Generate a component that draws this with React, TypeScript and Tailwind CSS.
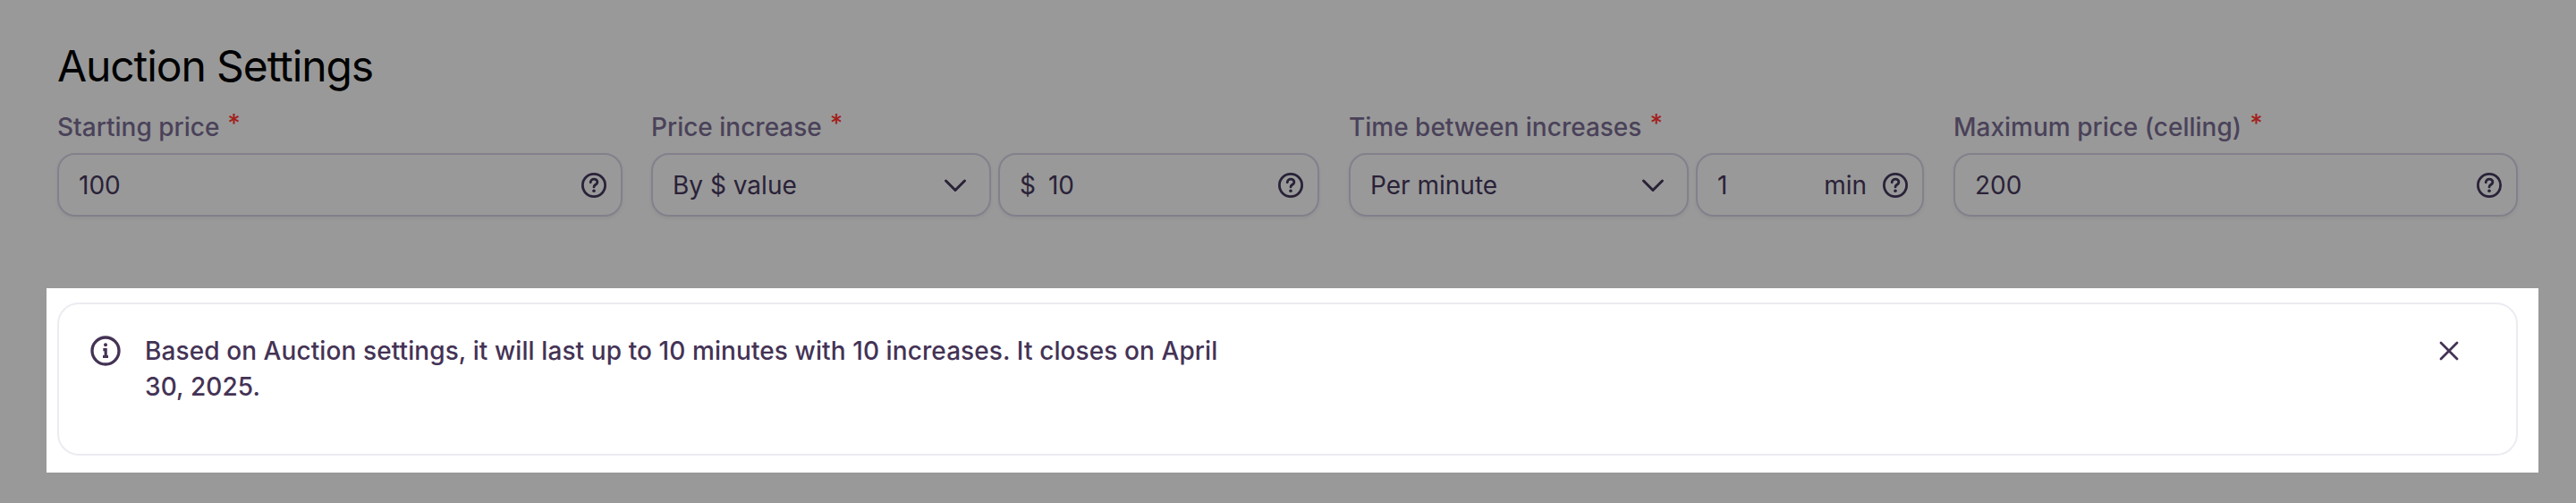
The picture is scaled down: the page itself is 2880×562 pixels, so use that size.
const font = { fontFamily: "Inter, 'Noto Sans', sans-serif" };

function Help() {
  return (
    <svg width="32" height="32" viewBox="0 0 32 32" fill="none" className="shrink-0 text-[#2a2238]">
      <circle cx="16" cy="16" r="12.6" stroke="currentColor" strokeWidth="2.8" />
      <path d="M12.2 12.8c0-2.1 1.7-3.6 3.9-3.6s3.8 1.4 3.8 3.3c0 2.7-3.9 2.8-3.9 5.4" stroke="currentColor" strokeWidth="2.8" strokeLinecap="round" />
      <circle cx="16" cy="22.2" r="1.8" fill="currentColor" />
    </svg>
  );
}

function Chevron() {
  return (
    <svg width="32" height="32" viewBox="0 0 32 32" fill="none" className="shrink-0 text-[#2a2238]">
      <path d="M5.5 11l10.5 10.5L26.5 11" stroke="currentColor" strokeWidth="3" strokeLinecap="round" strokeLinejoin="round" />
    </svg>
  );
}

function Label({ children }: { children: string }) {
  return (
    <div className="flex items-start h-[36px] text-[28px] leading-[36px] text-[#4a4259] font-medium mb-[11px]">
      <span>{children}</span>
      <span className="ml-[9px] text-[#a3201c] leading-[28px]">*</span>
    </div>
  );
}

function Box({ children, className }: { children: React.ReactNode; className: string }) {
  return (
    <div className={`h-[71px] flex items-center rounded-[20px] border-2 border-[#83808c] shadow-[0_2px_4px_rgba(0,0,0,0.06)] text-[28px] text-[#2a2238] ${className}`}>
      {children}
    </div>
  );
}

export default function App() {
  return (
    <div style={font} className="w-[2880px] h-[562px] bg-[#999999] overflow-hidden relative">
      <div className="pl-[64px] pr-[65px] pt-[46px]">
        <h1 className="text-[48px] leading-[56px] font-normal text-black tracking-[-1.1px] mb-[22px]">Auction Settings</h1>
        <div className="flex">
          <div className="w-[632px]">
            <Label>Starting price</Label>
            <Box className="pl-[22px] pr-[14px] justify-between"><span>100</span><Help /></Box>
          </div>
          <div className="w-[747px] ml-[32px]">
            <Label>Price increase</Label>
            <div className="flex gap-[8px]">
              <Box className="w-[380px] pl-[22px] pr-[22px] justify-between"><span>By $ value</span><Chevron /></Box>
              <Box className="flex-1 pl-[22px] pr-[14px]"><span>$</span><span className="ml-[14px] flex-1">10</span><Help /></Box>
            </div>
          </div>
          <div className="w-[643px] ml-[33px]">
            <Label>Time between increases</Label>
            <div className="flex gap-[8px]">
              <Box className="w-[380px] pl-[22px] pr-[22px] justify-between"><span>Per minute</span><Chevron /></Box>
              <Box className="flex-1 pl-[22px] pr-[14px]"><span className="flex-1">1</span><span className="mr-[16px]">min</span><Help /></Box>
            </div>
          </div>
          <div className="w-[631px] ml-[33px]">
            <Label>Maximum price (celling)</Label>
            <Box className="pl-[22px] pr-[14px] justify-between"><span>200</span><Help /></Box>
          </div>
        </div>
      </div>
      <div className="absolute left-[52px] top-[322px] w-[2786px] h-[206px] bg-white pl-[12px] pr-[23px] pt-[16px]">
        <div className="h-[171px] rounded-[24px] border-2 border-[#ecebf1] flex items-start pl-[32px] pr-[59px] pt-[32px]">
          <svg width="40" height="40" viewBox="0 0 24 24" fill="none" className="shrink-0 text-[#443355]">
            <circle cx="12" cy="12" r="9" stroke="currentColor" strokeWidth="2" />
            <path d="M10.4 11.2h1.7v4.6M10.2 15.9h3.6" stroke="currentColor" strokeWidth="1.9" />
            <circle cx="12" cy="8" r="1.2" fill="currentColor" />
          </svg>
          <p className="ml-[24px] w-[1240px] text-[28px] leading-[40px] tracking-[0.09px] text-[#443355] font-medium">
            Based on Auction settings, it will last up to 10 minutes with 10 increases. It closes on April 30, 2025.
          </p>
          <div className="flex-1" />
          <svg width="32" height="32" viewBox="0 0 32 32" fill="none" className="shrink-0 text-[#443355] mt-[4px]">
            <path d="M7 7l18 18M25 7L7 25" stroke="currentColor" strokeWidth="2.8" strokeLinecap="round" />
          </svg>
        </div>
      </div>
    </div>
  );
}
